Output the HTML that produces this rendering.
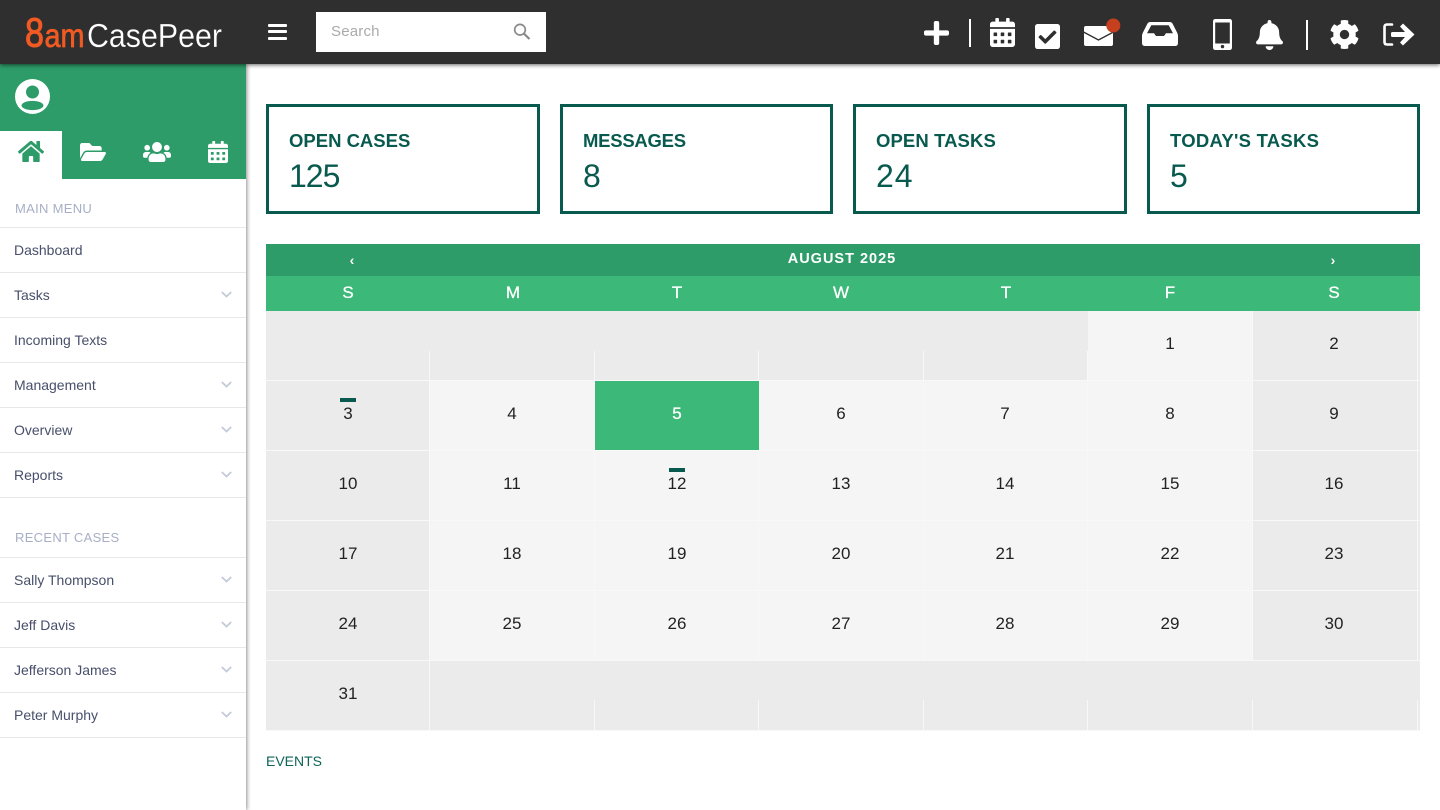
<!DOCTYPE html>
<html lang="en">
<head>
<meta charset="utf-8">
<title>CasePeer</title>
<style>
*{box-sizing:border-box}
html,body{margin:0;padding:0;width:1440px;height:810px;overflow:hidden;background:#fff;font-family:"Liberation Sans",Arial,sans-serif}
.a{position:absolute}
svg{position:absolute;display:block;overflow:visible}
#hdr{position:absolute;left:0;top:0;width:1440px;height:64px;background:#2f2f2f;box-shadow:0 1px 4px rgba(0,0,0,.6);z-index:5}
#side{position:absolute;left:0;top:64px;width:246px;height:746px;background:#fff;box-shadow:1px 0 4px rgba(0,0,0,.45);z-index:3}
.sec{position:absolute;left:15px;font-size:13px;line-height:16px;color:#a6afc5;letter-spacing:.3px;z-index:4}
.it{position:absolute;left:0;width:246px;height:45px;border-bottom:1px solid #e8e8e8;font-size:14px;line-height:44px;padding-left:14px;color:#474f6b;z-index:4}
.ln{position:absolute;left:0;width:246px;height:1px;background:#e8e8e8;z-index:4}
.it svg{left:221px;top:18px}
.box{position:absolute;top:104px;height:110px;border:3px solid #08594e;color:#08594e}
.box b{position:absolute;left:20px;top:23px;font-size:18.5px;line-height:22px;font-weight:bold;white-space:nowrap}
.box span{position:absolute;left:20px;top:51px;font-size:32px;line-height:36px}
.d{position:absolute;width:60px;height:20px;line-height:20px;text-align:center;font-size:17px;color:#222}
.h{position:absolute;top:283px;width:40px;height:20px;line-height:20px;text-align:center;font-size:17px;color:#fff;-webkit-text-stroke:.3px #fff}
.v{position:absolute;width:1px;background:#f8f8f8}
.r{position:absolute;left:266px;width:1154px;height:1px;background:#f8f8f8}
.f{position:absolute;background:#f5f5f5}
.bar{position:absolute;width:16px;height:4px;background:#08594e}
</style>
</head>
<body>

<div id="hdr">
  <svg style="left:0;top:0" width="240" height="64">
    <text x="25" y="46.500" font-family="Liberation Sans" font-size="41" fill="#f15a22" textLength="19" lengthAdjust="spacingAndGlyphs" stroke="#f15a22" stroke-width="1">8</text>
    <text x="44.500" y="47" font-family="Liberation Sans" font-size="33" fill="#f15a22" textLength="40" lengthAdjust="spacingAndGlyphs" stroke="#f15a22" stroke-width=".7">am</text>
    <text x="87" y="47" font-family="Liberation Sans" font-size="33.500" fill="#ffffff" textLength="135" lengthAdjust="spacingAndGlyphs" stroke="#2f2f2f" stroke-width=".2">CasePeer</text>
  </svg>
  <div class="a" style="left:268px;top:23.500px;width:19px;height:3px;background:#fff;border-radius:1px"></div>
  <div class="a" style="left:268px;top:30px;width:19px;height:3px;background:#fff;border-radius:1px"></div>
  <div class="a" style="left:268px;top:36.500px;width:19px;height:3px;background:#fff;border-radius:1px"></div>
  <div class="a" style="left:316px;top:12px;width:230px;height:40px;background:#fff"></div>
  <div class="a" style="left:331px;top:23px;font-size:15px;line-height:18px;color:#aaa;letter-spacing:.2px">Search</div>
  <svg style="left:513px;top:23px" width="18" height="17" viewBox="0 0 18 17"><circle cx="7" cy="6.700" r="5.300" fill="none" stroke="#8a8a8a" stroke-width="1.700"/><path d="M11 10.700L16.500 16" stroke="#8a8a8a" stroke-width="2.200" fill="none"/></svg>

  <svg style="left:924px;top:21px" width="25" height="24" viewBox="0 32 448 448" preserveAspectRatio="none"><path fill="#fff" d="M416 208H272V64c0-17.670-14.330-32-32-32h-32c-17.670 0-32 14.330-32 32v144H32c-17.670 0-32 14.330-32 32v32c0 17.670 14.330 32 32 32h144v144c0 17.670 14.330 32 32 32h32c17.670 0 32-14.330 32-32V304h144c17.670 0 32-14.330 32-32v-32c0-17.670-14.330-32-32-32z"/></svg>
  <div class="a" style="left:969px;top:19px;width:2px;height:28px;background:#fff"></div>
  <svg style="left:990px;top:18px" width="25" height="29" viewBox="0 0 448 512" preserveAspectRatio="none"><path fill="#fff" d="M0 464c0 26.500 21.500 48 48 48h352c26.500 0 48-21.500 48-48V192H0v272zm320-196c0-6.600 5.400-12 12-12h40c6.600 0 12 5.400 12 12v40c0 6.600-5.400 12-12 12h-40c-6.600 0-12-5.400-12-12v-40zm0 128c0-6.600 5.400-12 12-12h40c6.600 0 12 5.400 12 12v40c0 6.600-5.400 12-12 12h-40c-6.600 0-12-5.400-12-12v-40zM192 268c0-6.600 5.400-12 12-12h40c6.600 0 12 5.400 12 12v40c0 6.600-5.400 12-12 12h-40c-6.600 0-12-5.400-12-12v-40zm0 128c0-6.600 5.400-12 12-12h40c6.600 0 12 5.400 12 12v40c0 6.600-5.400 12-12 12h-40c-6.600 0-12-5.400-12-12v-40zM64 268c0-6.600 5.400-12 12-12h40c6.600 0 12 5.400 12 12v40c0 6.600-5.400 12-12 12H76c-6.600 0-12-5.400-12-12v-40zm0 128c0-6.600 5.400-12 12-12h40c6.600 0 12 5.400 12 12v40c0 6.600-5.400 12-12 12H76c-6.600 0-12-5.400-12-12v-40zM400 64h-48V16c0-8.800-7.200-16-16-16h-32c-8.800 0-16 7.200-16 16v48H160V16c0-8.800-7.200-16-16-16h-32c-8.800 0-16 7.200-16 16v48H48C21.500 64 0 85.500 0 112v48h448v-48c0-26.500-21.500-48-48-48z"/></svg>
  <svg style="left:1035px;top:24px" width="25" height="25" viewBox="0 32 448 448" preserveAspectRatio="none"><path fill="#fff" d="M400 480H48c-26.510 0-48-21.490-48-48V80c0-26.510 21.490-48 48-48h352c26.510 0 48 21.490 48 48v352c0 26.510-21.490 48-48 48zm-204.686-98.059l184-184c6.248-6.248 6.248-16.379 0-22.627l-22.627-22.627c-6.248-6.248-16.379-6.249-22.628 0L184 302.745l-70.059-70.059c-6.248-6.248-16.379-6.248-22.628 0l-22.627 22.627c-6.248 6.248-6.248 16.379 0 22.627l104 104c6.249 6.250 16.379 6.250 22.628.001z"/></svg>
  <svg style="left:1084px;top:26px" width="37" height="20" viewBox="0 0 37 20">
    <rect x="0" y="0" width="29" height="20" rx="2" fill="#fff"/>
    <path fill="none" stroke="#2f2f2f" stroke-width="1.300" d="M-.5 6L14.500 14L29.500 6"/>
    <circle cx="29.300" cy="-.500" r="7" fill="#c6401f"/>
  </svg>
  <svg style="left:1142px;top:22px" width="36" height="24" viewBox="0 0 36 24"><path fill="#fff" fill-rule="evenodd" d="M8 0H28Q29.500 0 30.500 1.500L35.300 11Q36 12.500 36 14V21Q36 24 33 24H3Q0 24 0 21V14Q0 12.500 .7 11L5.500 1.500Q6.500 0 8 0ZM9.300 3.200L5 11.300H12L14 14H22L24 11.300H31L26.700 3.200Z"/></svg>
  <svg style="left:1213px;top:19px" width="19" height="31" viewBox="0 0 19 31"><path fill="#fff" fill-rule="evenodd" d="M2.500 0H16.500Q19 0 19 2.500V28.500Q19 31 16.500 31H2.500Q0 31 0 28.500V2.500Q0 0 2.500 0ZM2.200 3.500V24.500H16.800V3.500Z"/><circle cx="9.500" cy="27.600" r="1.700" fill="#2f2f2f"/></svg>
  <svg style="left:1256px;top:20px" width="27" height="30" viewBox="0 0 448 512" preserveAspectRatio="none"><path fill="#fff" d="M224 512c35.320 0 63.970-28.650 63.970-64H160.030c0 35.350 28.650 64 63.970 64zm215.390-149.710c-19.320-20.760-55.470-51.990-55.470-154.290 0-77.700-54.480-139.900-127.940-155.160V32c0-17.670-14.320-32-31.980-32s-31.980 14.330-31.980 32v20.840C118.560 68.100 64.080 130.300 64.080 208c0 102.300-36.150 133.530-55.470 154.290-6 6.450-8.660 14.160-8.610 21.710.11 16.400 12.980 32 32.100 32h383.800c19.120 0 32-15.600 32.100-32 .05-7.550-2.610-15.270-8.610-21.710z"/></svg>
  <div class="a" style="left:1306px;top:20px;width:2px;height:30px;background:#fff"></div>
  <svg style="left:1330px;top:20px" width="29" height="29" viewBox="8 8 496 496"><path fill="#fff" d="M487.400 315.700l-42.600-24.600c4.300-23.200 4.300-47 0-70.200l42.600-24.600c4.900-2.800 7.100-8.600 5.500-14-11.100-35.600-30-67.800-54.700-94.600-3.800-4.100-10-5.100-14.800-2.300L380.800 110c-17.900-15.400-38.500-27.300-60.800-35.100V25.800c0-5.600-3.900-10.500-9.400-11.700-36.700-8.200-74.300-7.800-109.200 0-5.500 1.200-9.400 6.100-9.400 11.700V75c-22.200 7.900-42.800 19.800-60.800 35.100L88.700 85.500c-4.900-2.800-11-1.900-14.800 2.300-24.700 26.700-43.600 58.900-54.700 94.600-1.700 5.400.6 11.200 5.500 14L67.300 221c-4.300 23.200-4.300 47 0 70.200l-42.600 24.600c-4.900 2.800-7.100 8.600-5.500 14 11.100 35.600 30 67.800 54.700 94.600 3.800 4.100 10 5.100 14.800 2.300l42.600-24.600c17.900 15.400 38.500 27.300 60.800 35.100v49.200c0 5.600 3.900 10.500 9.400 11.700 36.700 8.200 74.300 7.800 109.200 0 5.500-1.200 9.400-6.100 9.400-11.700v-49.200c22.200-7.900 42.800-19.800 60.800-35.100l42.600 24.600c4.900 2.800 11 1.900 14.800-2.300 24.700-26.700 43.600-58.900 54.700-94.600 1.500-5.500-.7-11.300-5.600-14.100zM256 336c-44.100 0-80-35.900-80-80s35.900-80 80-80 80 35.900 80 80-35.900 80-80 80z"/></svg>
  <svg style="left:1383px;top:23px" width="32" height="23" viewBox="0 0 32 23"><path fill="none" stroke="#fff" stroke-width="2.600" stroke-linecap="round" stroke-linejoin="round" d="M9 1.500H4Q1.500 1.500 1.500 4V19Q1.500 21.500 4 21.500H9"/><path fill="#fff" d="M20 .500L31.500 11.500L20 22.500L17 19.500L22 14L9.500 14Q8 14 8 12.500V10.500Q8 9 9.500 9H22L17 3.500Z"/></svg>
</div>

<div id="side">
  <div class="a" style="left:0;top:0;width:246px;height:115px;background:#2e9c69"></div>
  <div class="a" style="left:0;top:67px;width:62px;height:48px;background:#fff"></div>
  <svg style="left:15px;top:15px" width="35" height="35" viewBox="0 0 35 35"><circle cx="17.500" cy="17.500" r="17.500" fill="#fff"/><circle cx="17.500" cy="13" r="6.500" fill="#2e9c69"/><ellipse cx="17.500" cy="26.500" rx="11" ry="4.600" fill="#2e9c69"/></svg>
  <svg style="left:18px;top:77px" width="26" height="21" viewBox="0 32 576 448" preserveAspectRatio="none"><path fill="#2e9c69" d="M280.370 148.260L96 300.110V464a16 16 0 0 0 16 16l112.060-.29a16 16 0 0 0 15.920-16V368a16 16 0 0 1 16-16h64a16 16 0 0 1 16 16v95.640a16 16 0 0 0 16 16.050L464 480a16 16 0 0 0 16-16V300L295.670 148.260a12.190 12.190 0 0 0-15.300 0zM571.600 251.470L488 182.560V44.050a12 12 0 0 0-12-12h-56a12 12 0 0 0-12 12v72.610L318.470 43a48 48 0 0 0-61 0L4.340 251.470a12 12 0 0 0-1.600 16.900l25.500 31A12 12 0 0 0 45.150 301l235.220-193.740a12.190 12.190 0 0 1 15.300 0L530.900 301a12 12 0 0 0 16.900-1.600l25.500-31a12 12 0 0 0-1.700-16.930z"/></svg>
  <svg style="left:80px;top:79px" width="26" height="18" viewBox="0 64 576 384" preserveAspectRatio="none"><path fill="#fff" d="M572.694 292.093L500.270 416.248A63.997 63.997 0 0 1 444.989 448H45.025c-18.523 0-30.064-20.093-20.731-36.093l72.424-124.155A64 64 0 0 1 152 256h399.964c18.523 0 30.064 20.093 20.730 36.093zM152 224h328v-48c0-26.510-21.490-48-48-48H272l-64-64H48C21.490 64 0 85.490 0 112v278.046l69.077-118.418C86.214 242.250 117.989 224 152 224z"/></svg>
  <svg style="left:143px;top:78px" width="28" height="20" viewBox="0 32 640 448" preserveAspectRatio="none"><path fill="#fff" d="M96 224c35.300 0 64-28.700 64-64s-28.700-64-64-64-64 28.700-64 64 28.700 64 64 64zm448 0c35.300 0 64-28.700 64-64s-28.700-64-64-64-64 28.700-64 64 28.700 64 64 64zm32 32h-64c-17.600 0-33.500 7.100-45.100 18.600 40.300 22.100 68.900 62 75.100 109.400h66c17.700 0 32-14.300 32-32v-32c0-35.300-28.700-64-64-64zm-256 0c61.900 0 112-50.100 112-112S381.900 32 320 32 208 82.100 208 144s50.100 112 112 112zm76.800 32h-8.300c-20.800 10-43.900 16-68.500 16s-47.600-6-68.500-16h-8.300C179.600 288 128 339.600 128 403.200V432c0 26.500 21.500 48 48 48h288c26.500 0 48-21.500 48-48v-28.800c0-63.600-51.600-115.200-115.200-115.200zm-223.700-13.400C161.500 263.100 145.600 256 128 256H64c-35.300 0-64 28.700-64 64v32c0 17.700 14.300 32 32 32h65.900c6.300-47.400 34.900-87.300 75.200-109.400z"/></svg>
  <svg style="left:208px;top:77px" width="20" height="22" viewBox="0 0 448 512" preserveAspectRatio="none"><path fill="#fff" d="M0 464c0 26.500 21.500 48 48 48h352c26.500 0 48-21.500 48-48V192H0v272zm320-196c0-6.600 5.400-12 12-12h40c6.600 0 12 5.400 12 12v40c0 6.600-5.400 12-12 12h-40c-6.600 0-12-5.400-12-12v-40zm0 128c0-6.600 5.400-12 12-12h40c6.600 0 12 5.400 12 12v40c0 6.600-5.400 12-12 12h-40c-6.600 0-12-5.400-12-12v-40zM192 268c0-6.600 5.400-12 12-12h40c6.600 0 12 5.400 12 12v40c0 6.600-5.400 12-12 12h-40c-6.600 0-12-5.400-12-12v-40zm0 128c0-6.600 5.400-12 12-12h40c6.600 0 12 5.400 12 12v40c0 6.600-5.400 12-12 12h-40c-6.600 0-12-5.400-12-12v-40zM64 268c0-6.600 5.400-12 12-12h40c6.600 0 12 5.400 12 12v40c0 6.600-5.400 12-12 12H76c-6.600 0-12-5.400-12-12v-40zm0 128c0-6.600 5.400-12 12-12h40c6.600 0 12 5.400 12 12v40c0 6.600-5.400 12-12 12H76c-6.600 0-12-5.400-12-12v-40zM400 64h-48V16c0-8.800-7.200-16-16-16h-32c-8.800 0-16 7.200-16 16v48H160V16c0-8.800-7.200-16-16-16h-32c-8.800 0-16 7.200-16 16v48H48C21.500 64 0 85.500 0 112v48h448v-48c0-26.500-21.500-48-48-48z"/></svg>
</div>

<div class="sec" style="top:201px">MAIN MENU</div>
<div class="ln" style="top:227px"></div>
<div class="it" style="top:228px">Dashboard</div>
<div class="it" style="top:273px">Tasks<svg width="11" height="7" viewBox="0 0 11 7"><path d="M.8 1L5.500 5.500L10.200 1" fill="none" stroke="#c4cad8" stroke-width="1.800"/></svg></div>
<div class="it" style="top:318px">Incoming Texts</div>
<div class="it" style="top:363px">Management<svg width="11" height="7" viewBox="0 0 11 7"><path d="M.8 1L5.500 5.500L10.200 1" fill="none" stroke="#c4cad8" stroke-width="1.800"/></svg></div>
<div class="it" style="top:408px">Overview<svg width="11" height="7" viewBox="0 0 11 7"><path d="M.8 1L5.500 5.500L10.200 1" fill="none" stroke="#c4cad8" stroke-width="1.800"/></svg></div>
<div class="it" style="top:453px">Reports<svg width="11" height="7" viewBox="0 0 11 7"><path d="M.8 1L5.500 5.500L10.200 1" fill="none" stroke="#c4cad8" stroke-width="1.800"/></svg></div>

<div class="sec" style="top:530px">RECENT CASES</div>
<div class="ln" style="top:557px"></div>
<div class="it" style="top:558px">Sally Thompson<svg width="11" height="7" viewBox="0 0 11 7"><path d="M.8 1L5.500 5.500L10.200 1" fill="none" stroke="#c4cad8" stroke-width="1.800"/></svg></div>
<div class="it" style="top:603px">Jeff Davis<svg width="11" height="7" viewBox="0 0 11 7"><path d="M.8 1L5.500 5.500L10.200 1" fill="none" stroke="#c4cad8" stroke-width="1.800"/></svg></div>
<div class="it" style="top:648px">Jefferson James<svg width="11" height="7" viewBox="0 0 11 7"><path d="M.8 1L5.500 5.500L10.200 1" fill="none" stroke="#c4cad8" stroke-width="1.800"/></svg></div>
<div class="it" style="top:693px">Peter Murphy<svg width="11" height="7" viewBox="0 0 11 7"><path d="M.8 1L5.500 5.500L10.200 1" fill="none" stroke="#c4cad8" stroke-width="1.800"/></svg></div>

<div class="box" style="left:266px;width:274px"><b>OPEN CASES</b><span style="letter-spacing:-1px">125</span></div>
<div class="box" style="left:560px;width:273px"><b style="letter-spacing:-.25px">MESSAGES</b><span>8</span></div>
<div class="box" style="left:853px;width:274px"><b style="letter-spacing:.1px">OPEN TASKS</b><span style="letter-spacing:1px">24</span></div>
<div class="box" style="left:1147px;width:273px"><b style="letter-spacing:.25px">TODAY'S TASKS</b><span>5</span></div>

<div class="a" style="left:266px;top:244px;width:1154px;height:32px;background:#2e9c69"></div>
<div class="a" style="left:266px;top:276px;width:1154px;height:35px;background:#3cb878"></div>
<div class="a" style="left:342px;top:252px;width:20px;text-align:center;color:#fff;font-size:14px;line-height:16px;font-weight:bold">‹</div>
<div class="a" style="left:1323px;top:252px;width:20px;text-align:center;color:#fff;font-size:14px;line-height:16px;font-weight:bold">›</div>
<div class="a" style="left:742px;top:251px;width:200px;text-align:center;color:#fff;font-size:14.500px;line-height:16px;font-weight:bold;letter-spacing:1px">AUGUST 2025</div>

<div class="h" style="left:328px">S</div>
<div class="h" style="left:493px">M</div>
<div class="h" style="left:657px">T</div>
<div class="h" style="left:821px">W</div>
<div class="h" style="left:986px">T</div>
<div class="h" style="left:1150px">F</div>
<div class="h" style="left:1314px">S</div>

<div class="a" style="left:266px;top:311px;width:1154px;height:420px;background:#ebebeb"></div>
<div class="f" style="left:1088px;top:311px;width:165px;height:70px"></div>
<div class="f" style="left:430px;top:381px;width:823px;height:280px"></div>

<div class="r" style="top:380px"></div>
<div class="r" style="top:450px"></div>
<div class="r" style="top:520px"></div>
<div class="r" style="top:590px"></div>
<div class="r" style="top:660px"></div>
<div class="r" style="top:730px"></div>

<div class="v" style="left:429px;top:351px;height:380px"></div>
<div class="v" style="left:594px;top:351px;height:30px"></div>
<div class="v" style="left:758px;top:351px;height:30px"></div>
<div class="v" style="left:923px;top:351px;height:30px"></div>
<div class="v" style="left:1087px;top:351px;height:30px"></div>
<div class="v" style="left:1252px;top:311px;height:350px"></div>
<div class="v" style="left:1417px;top:311px;height:350px"></div>
<div class="v" style="left:594px;top:381px;height:280px"></div>
<div class="v" style="left:758px;top:381px;height:280px"></div>
<div class="v" style="left:923px;top:381px;height:280px"></div>
<div class="v" style="left:1087px;top:381px;height:280px"></div>
<div class="v" style="left:594px;top:700px;height:31px"></div>
<div class="v" style="left:758px;top:700px;height:31px"></div>
<div class="v" style="left:923px;top:700px;height:31px"></div>
<div class="v" style="left:1087px;top:700px;height:31px"></div>
<div class="v" style="left:1252px;top:700px;height:31px"></div>
<div class="v" style="left:1417px;top:700px;height:31px"></div>

<div class="a" style="left:595px;top:381px;width:164px;height:69px;background:#3cb878"></div>
<div class="bar" style="left:340px;top:398px"></div>
<div class="bar" style="left:669px;top:468px"></div>

<div class="d" style="left:1140px;top:334px">1</div>
<div class="d" style="left:1304px;top:334px">2</div>

<div class="d" style="left:318px;top:404px">3</div>
<div class="d" style="left:482px;top:404px">4</div>
<div class="d" style="left:647px;top:404px;color:#fff;-webkit-text-stroke:.3px #fff">5</div>
<div class="d" style="left:811px;top:404px">6</div>
<div class="d" style="left:975px;top:404px">7</div>
<div class="d" style="left:1140px;top:404px">8</div>
<div class="d" style="left:1304px;top:404px">9</div>

<div class="d" style="left:318px;top:474px">10</div>
<div class="d" style="left:482px;top:474px">11</div>
<div class="d" style="left:647px;top:474px">12</div>
<div class="d" style="left:811px;top:474px">13</div>
<div class="d" style="left:975px;top:474px">14</div>
<div class="d" style="left:1140px;top:474px">15</div>
<div class="d" style="left:1304px;top:474px">16</div>

<div class="d" style="left:318px;top:544px">17</div>
<div class="d" style="left:482px;top:544px">18</div>
<div class="d" style="left:647px;top:544px">19</div>
<div class="d" style="left:811px;top:544px">20</div>
<div class="d" style="left:975px;top:544px">21</div>
<div class="d" style="left:1140px;top:544px">22</div>
<div class="d" style="left:1304px;top:544px">23</div>

<div class="d" style="left:318px;top:614px">24</div>
<div class="d" style="left:482px;top:614px">25</div>
<div class="d" style="left:647px;top:614px">26</div>
<div class="d" style="left:811px;top:614px">27</div>
<div class="d" style="left:975px;top:614px">28</div>
<div class="d" style="left:1140px;top:614px">29</div>
<div class="d" style="left:1304px;top:614px">30</div>

<div class="d" style="left:318px;top:684px">31</div>

<div class="a" style="left:266px;top:753px;font-size:14px;line-height:16px;color:#0f6458">EVENTS</div>

</body>
</html>
